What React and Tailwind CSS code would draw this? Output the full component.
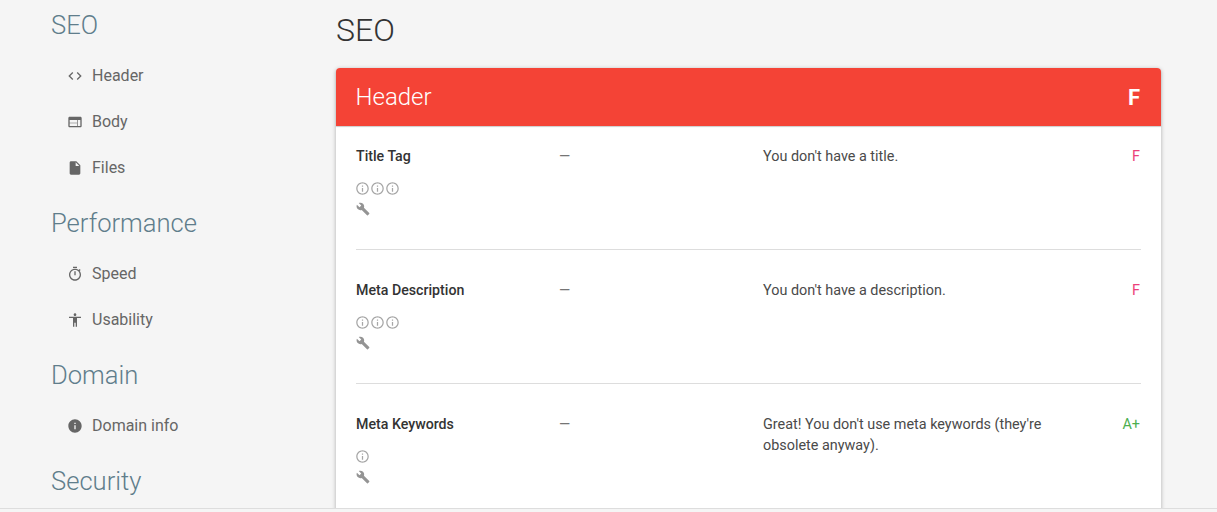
const paths = {
  code: "M9.4 16.6L4.8 12l4.6-4.6L8 6l-6 6 6 6 1.4-1.4zm5.2 0l4.6-4.6-4.6-4.6L16 6l6 6-6 6-1.4-1.4z",
  web: "M20 4H4c-1.1 0-1.99.9-1.99 2L2 18c0 1.1.9 2 2 2h16c1.1 0 2-.9 2-2V6c0-1.1-.9-2-2-2zm-5 14H4v-4h11v4zm0-5H4V9h11v4zm5 5h-4V9h4v9z",
  file: "M6 2c-1.1 0-1.99.9-1.99 2L4 20c0 1.1.89 2 1.99 2H18c1.1 0 2-.9 2-2V8l-6-6H6zm7 7V3.5L18.5 9H13z",
  timer:
    "M15 1H9v2h6V1zm-4 13h2V8h-2v6zm8.03-6.61l1.42-1.42c-.43-.51-.9-.99-1.41-1.41l-1.42 1.42C16.07 4.74 14.12 4 12 4c-4.97 0-9 4.03-9 9s4.02 9 9 9 9-4.03 9-9c0-2.12-.74-4.07-1.97-5.61zM12 20c-3.87 0-7-3.13-7-7s3.13-7 7-7 7 3.13 7 7-3.13 7-7 7z",
  accessibility: "M12 2c1.1 0 2 .9 2 2s-.9 2-2 2-2-.9-2-2 .9-2 2-2zm9 7h-6v13h-2v-6h-2v6H9V9H3V7h18v2z",
  info: "M12 2C6.48 2 2 6.48 2 12s4.48 10 10 10 10-4.48 10-10S17.52 2 12 2zm1 15h-2v-6h2v6zm0-8h-2V7h2v2z",
  infoOutline:
    "M11 17h2v-6h-2v6zm1-15C6.48 2 2 6.48 2 12s4.48 10 10 10 10-4.48 10-10S17.52 2 12 2zm0 18c-4.41 0-8-3.59-8-8s3.59-8 8-8 8 3.59 8 8-3.59 8-8 8zM11 9h2V7h-2v2z",
  build:
    "M22.7 19l-9.1-9.1c.9-2.3.4-5-1.5-6.9-2-2-5-2.4-7.4-1.3L9 6 6 9 1.6 4.7C.4 7.1.9 10.1 2.9 12.1c1.9 1.9 4.6 2.4 6.9 1.5l9.1 9.1c.4.4 1 .4 1.4 0l2.3-2.3c.5-.4.5-1.1.1-1.4z",
};

function Icon({ name, className }) {
  return (
    <svg viewBox="0 0 24 24" fill="currentColor" className={className}>
      <path d={paths[name]} />
    </svg>
  );
}

const nav = [
  {
    title: "SEO",
    items: [
      { icon: "code", label: "Header" },
      { icon: "web", label: "Body" },
      { icon: "file", label: "Files" },
    ],
  },
  {
    title: "Performance",
    items: [
      { icon: "timer", label: "Speed" },
      { icon: "accessibility", label: "Usability" },
    ],
  },
  { title: "Domain", items: [{ icon: "info", label: "Domain info" }] },
  { title: "Security", items: [] },
];

const rows = [
  { name: "Title Tag", text: "You don't have a title.", grade: "F", infos: 3 },
  { name: "Meta Description", text: "You don't have a description.", grade: "F", infos: 3 },
  {
    name: "Meta Keywords",
    text: "Great! You don't use meta keywords (they're obsolete anyway).",
    grade: "A+",
    infos: 1,
  },
];

function Row({ row }) {
  return (
    <div className="h-[124px] mb-[10px] flex-none border-b border-[#dddddd] pt-5 flex text-[14.4px] leading-[21px]">
      <div className="w-[203px] flex-none">
        <div className="font-medium text-[14.2px] text-[#333333]">{row.name}</div>
        <div className="flex mt-[14px] -ml-[1.5px] text-[#a6a6a6]">
          {Array.from({ length: row.infos }).map((_, i) => (
            <Icon key={i} name="infoOutline" className="w-[15px] h-[15px] flex-none -mt-[0.5px]" />
          ))}
        </div>
        <Icon name="build" className="w-[14px] h-[14px] mt-[6px] text-[#949494]" />
      </div>
      <div className="w-[204px] flex-none text-[#757575]">—</div>
      <div className="w-[320px] flex-none text-[#4a4a4a]">{row.text}</div>
      <div className={`flex-1 text-right pr-px ${row.grade === "F" ? "text-[#ec407a]" : "text-[#4caf50]"}`}>
        {row.grade}
      </div>
    </div>
  );
}

export default function App() {
  return (
    <div className="h-[512px] overflow-hidden bg-[#f5f5f5] font-['Roboto',sans-serif] flex flex-col">
      <div className="h-[508px] flex-none flex overflow-hidden border-b border-[#dddddd] box-content">
        <aside className="w-[336px] flex-none pl-[51px] -mt-[7px]">
          {nav.map((group) => (
            <div key={group.title}>
              <h2 className="pt-[15px] pb-[11px] text-[25.6px] leading-[34px] font-light text-[#607d8b]">{group.title}</h2>
              {group.items.map((item) => (
                <div key={item.label} className="h-[46px] flex items-center pl-[16px] text-[#666666]">
                  <Icon name={item.icon} className="w-[16px] h-[16px] flex-none" />
                  <span className="ml-[9px] text-[16px]">{item.label}</span>
                </div>
              ))}
            </div>
          ))}
        </aside>
        <main className="w-[825px] flex-none">
          <h1 className="h-[68px] pt-[10px] text-[32px] leading-10 font-light text-[#333333]">SEO</h1>
          <div className="bg-white rounded-sm shadow-[0_1px_4px_rgba(0,0,0,0.3)] min-h-[500px]">
            <div className="h-[58px] rounded-t-sm bg-[#f44336] text-white flex items-center justify-between pl-[19.5px] pr-[21px] shadow-[0_1px_1px_rgba(0,0,0,0.2)]">
              <span className="text-2xl font-light">Header</span>
              <span className="text-[22px] font-bold">F</span>
            </div>
            <div className="px-5">
              {rows.map((row) => (
                <Row key={row.name} row={row} />
              ))}
            </div>
          </div>
        </main>
      </div>
    </div>
  );
}
